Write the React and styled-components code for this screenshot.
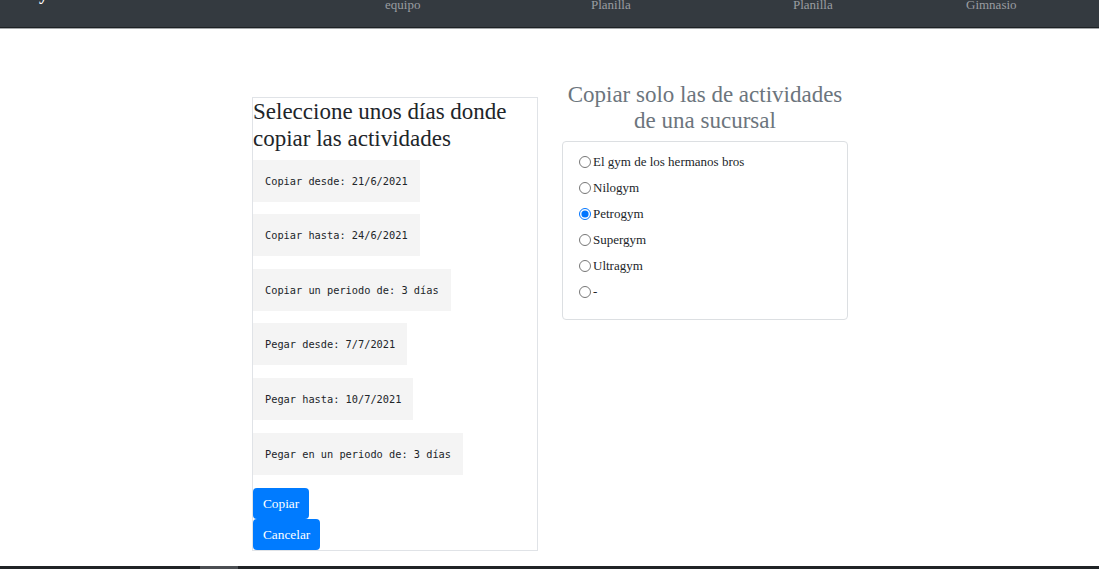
import React from 'react';
import styled, { createGlobalStyle } from 'styled-components';

const GlobalStyle = createGlobalStyle`
  html, body {
    margin: 0;
    padding: 0;
    background: #ffffff;
    font-family: "Liberation Serif", "Times New Roman", serif;
    color: #212529;
  }
  #root {
    min-height: 569px;
    display: flex;
    flex-direction: column;
  }
`;

const Navbar = styled.nav`
  height: 27px;
  background: #343a40;
  border-bottom: 1px solid #1d2124;
  box-shadow: 0 1px 0 #a3a6a9;
  display: flex;
  align-items: flex-start;
  overflow: hidden;
`;

const Brand = styled.div`
  width: 360px;
  padding-left: 25px;
  margin-top: -16px;
  font-size: 18px;
  font-weight: bold;
  color: #ffffff;
  white-space: nowrap;
`;

const NavLink = styled.div`
  width: ${(p) => p.width}px;
  margin-top: -3px;
  font-size: 13px;
  color: #9a9da0;
  white-space: nowrap;
`;

const Main = styled.main`
  flex: 1;
  display: flex;
  justify-content: center;
  align-items: flex-start;
  gap: 24px;
  padding-top: 54px;
  padding-left: 1px;
`;

const LeftCard = styled.section`
  width: 284px;
  margin-top: 15px;
  border: 1px solid #e0e3e7;
  display: flex;
  flex-direction: column;
  align-items: flex-start;
`;

const Title = styled.h2`
  margin: 0 0 ${(p) => p.gap}px;
  font-size: 23px;
  font-weight: normal;
  line-height: ${(p) => p.lh}px;
  color: ${(p) => p.color};
  text-align: ${(p) => p.align};
`;

const Periods = styled.div`
  display: flex;
  flex-direction: column;
  align-items: flex-start;
  gap: 12.6px;
  margin-bottom: 13.5px;
`;

const Period = styled.pre`
  margin: 0;
  padding: 14px 12px;
  background: #f4f4f4;
  font-family: "DejaVu Sans Mono", "Liberation Mono", monospace;
  font-size: 10.3px;
  line-height: 14px;
  color: #212529;
`;

const Button = styled.button`
  display: block;
  border: none;
  border-radius: 4px;
  background: #007bff;
  color: #ffffff;
  font-family: "Liberation Serif", "Times New Roman", serif;
  font-size: 13.3px;
  line-height: 15px;
  padding: 8px 10px;
  cursor: pointer;
`;

const RightColumn = styled.section`
  width: 286px;
`;

const BranchBox = styled.div`
  border: 1px solid #dcdfe2;
  border-radius: 4px;
  padding: 7px 16px 14px;
  display: flex;
  flex-direction: column;
`;

const RadioRow = styled.label`
  display: flex;
  align-items: center;
  height: 26px;
  font-size: 13px;
  color: #212529;
`;

const Radio = styled.input`
  margin: 0 2px 0 0;
  width: 12px;
  height: 12px;
`;

const Footer = styled.footer`
  height: 3px;
  background: #202326;
`;

const FooterThumb = styled.div`
  margin-left: 200px;
  width: 38px;
  height: 3px;
  background: #4b4e52;
`;

const periods = [
  'Copiar desde: 21/6/2021',
  'Copiar hasta: 24/6/2021',
  'Copiar un periodo de: 3 días',
  'Pegar desde: 7/7/2021',
  'Pegar hasta: 10/7/2021',
  'Pegar en un periodo de: 3 días',
];

const branches = ['El gym de los hermanos bros', 'Nilogym', 'Petrogym', 'Supergym', 'Ultragym', '-'];

const App = () => {
  const [branch, setBranch] = React.useState('Petrogym');

  return (
    <>
      <GlobalStyle />
      <Navbar>
        <Brand>GymTEC: Administración</Brand>
        <NavLink width={206}>equipo</NavLink>
        <NavLink width={202}>Planilla</NavLink>
        <NavLink width={173}>Planilla</NavLink>
        <NavLink width={100}>Gimnasio</NavLink>
      </Navbar>
      <Main>
        <LeftCard>
          <Title gap={7.6} lh={27} color="#212529" align="left">
            Seleccione unos días donde copiar las actividades
          </Title>
          <Periods>
            {periods.map((p) => (
              <Period key={p}>{p}</Period>
            ))}
          </Periods>
          <Button>Copiar</Button>
          <Button>Cancelar</Button>
        </LeftCard>
        <RightColumn>
          <Title gap={7} lh={26} color="#6c757d" align="center">
            Copiar solo las de actividades de una sucursal
          </Title>
          <BranchBox>
            {branches.map((b) => (
              <RadioRow key={b}>
                <Radio
                  type="radio"
                  name="sucursal"
                  checked={branch === b}
                  onChange={() => setBranch(b)}
                />
                {b}
              </RadioRow>
            ))}
          </BranchBox>
        </RightColumn>
      </Main>
      <Footer>
        <FooterThumb />
      </Footer>
    </>
  );
};

export default App;
